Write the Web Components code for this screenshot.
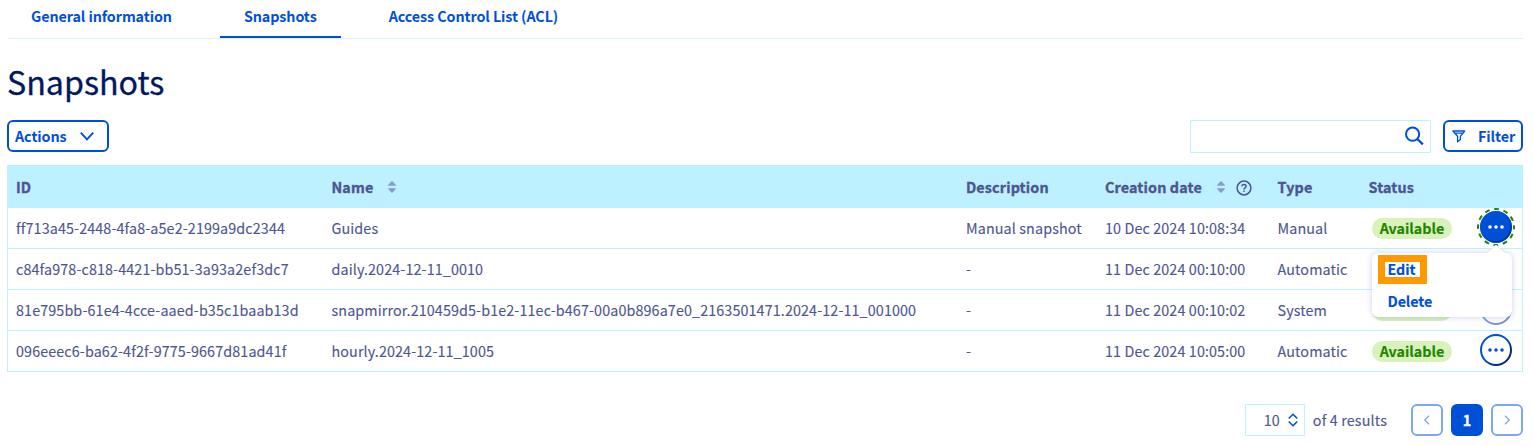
<!DOCTYPE html>
<html lang="en">
<head>
<meta charset="utf-8">
<title>Snapshots</title>
<style>
body { margin: 0; background: #fff; font-family: "Noto Sans CJK SC", "Noto Sans", sans-serif; font-size: 14.33px; line-height: 20px; color: #4d5592; --blue: #0050d7; --line: #bef1ff; }
</style>
</head>
<body>
<snapshot-page></snapshot-page>
<script>
const define = (name, html) => {
  const template = document.createElement('template');
  template.innerHTML = html;
  customElements.define(name, class extends HTMLElement {
    constructor() {
      super();
      this.attachShadow({ mode: 'open' }).append(template.content.cloneNode(true));
    }
  });
};

define('nav-tab', `<style>
:host { display: block; box-sizing: border-box; height: 38px; padding: 6px 24px 0; color: var(--blue); font-weight: 700; letter-spacing: -.09px; white-space: nowrap; }
:host([active]) { border-bottom: 2px solid var(--blue); }
</style><slot></slot>`);

define('tab-bar', `<style>
:host { display: flex; gap: 24px; height: 38px; border-bottom: 1px solid #def3fb; margin: 0 10px 0 8px; padding-left: 0; }
</style><slot></slot>`);

define('outline-button', `<style>
:host { display: flex; box-sizing: border-box; height: 32px; align-items: center; border: 2px solid var(--blue); border-radius: 6px; color: var(--blue); font-weight: 700; letter-spacing: -.09px; }
</style><slot></slot>`);

define('search-box', `<style>
:host { display: flex; box-sizing: border-box; width: 241px; height: 33px; border: 1px solid var(--line); border-radius: 1px; justify-content: flex-end; padding: 5px 6px 0 0; }
svg { width: 20px; height: 20px; }
</style><svg viewBox="0 0 20 20" fill="none" stroke="#0050d7" stroke-width="2"><circle cx="8.6" cy="8.2" r="6.6"/><path d="M13.3 13l5.6 5.4" stroke-width="2.3"/></svg>`);

define('sort-icon', `<style>
:host { display: block; width: 8px; height: 12px; }
svg { display: block; }
</style><svg width="8" height="12" viewBox="0 0 8 12" fill="#869dcb"><path d="M0 4.7Q0 4.2 .4 3.8L3.3.6Q4 0 4.7.6L7.6 3.8Q8 4.2 8 4.7ZM0 7.3Q0 7.8.4 8.2L3.3 11.4Q4 12 4.7 11.4L7.6 8.2Q8 7.8 8 7.3Z"/></svg>`);

define('help-icon', `<style>
:host { display: block; width: 16px; height: 16px; }
svg { display: block; }
</style><svg width="16" height="16" viewBox="0 0 16 16" fill="none" stroke="#4d5592" stroke-width="1.5"><circle cx="8" cy="8" r="6.9"/><path d="M5.9 6.3Q6 4.4 8 4.4Q10.1 4.4 10.1 6.2Q10.1 7.2 9 7.8Q8 8.4 8 9.5M8 10.6V12.1"/></svg>`);

define('data-row', `<style>
:host { display: grid; grid-template-columns: 315.5px 634.5px 139px 172.5px 91px 111px 1fr; height: 40px; border-bottom: 1px solid var(--line); letter-spacing: .115px; -webkit-text-stroke: .12px; }
:host([head]) { height: 42px; border: 0; background: var(--line); font-weight: 700; letter-spacing: .14px; -webkit-text-stroke: .35px #4d5592; }
::slotted(*) { position: relative; }
</style><slot></slot>`);

define('data-cell', `<style>
:host { display: flex; align-items: center; padding: 0 0 0 8px; white-space: nowrap; min-width: 0; }
:host([action]) { align-items: flex-start; padding-top: 3px; }
</style><slot></slot>`);

define('data-table', `<style>
:host { display: block; border: 1px solid var(--line); border-bottom: 0; margin: 12px 10px 0 7px; }
</style><slot></slot>`);

define('status-badge', `<style>
:host { display: block; box-sizing: border-box; width: 80px; height: 21px; line-height: 20px; padding-left: 1px; text-align: center; margin-left: 3px; border-radius: 11px; background: #d9f1bb; color: #228500; font-weight: 700; letter-spacing: 0; }
</style><slot></slot>`);

define('more-button', `<style>
:host { display: block; width: 32px; height: 32px; position: relative; }
svg { display: block; overflow: visible; }
.fill, .ring { display: none; }
:host([active]) .fill, :host([active]) .ring { display: block; }
:host([active]) { --dot: #fff; }
:host([active]) .edge { opacity: .6; }
.dots { fill: var(--dot, #0050d7); }
</style><svg width="32" height="32" viewBox="0 0 32 32">
<defs><linearGradient id="edge" x1="0" y1="0" x2="1" y2="1"><stop offset=".45" stop-color="#0050d7"/><stop offset=".8" stop-color="#00297a"/></linearGradient></defs>
<circle class="fill" cx="16" cy="16" r="16" fill="#0050d7"/>
<circle class="edge" cx="16" cy="16" r="15" fill="none" stroke="url(#edge)" stroke-width="2"/>
<circle class="ring" cx="16" cy="16" r="18" fill="none" stroke="#228500" stroke-width="2" stroke-dasharray="4.8 4.625" stroke-dashoffset="2.4"/>
<g class="dots"><circle cx="10" cy="16" r="1.8"/><circle cx="16" cy="16" r="1.8"/><circle cx="22" cy="16" r="1.8"/></g></svg>`);

define('action-menu', `<style>
:host { position: absolute; z-index: 5; left: -108px; top: 42px; box-sizing: border-box; width: 140px; height: 64px; border-radius: 6px; background: #fff; box-shadow: 0 0 6px rgba(0,14,156,.2); color: var(--blue); font-weight: 700; letter-spacing: -.1px; }
svg { position: absolute; left: 114px; top: -8px; }
.item { display: flex; align-items: center; height: 32px; padding-left: 16px; position: relative; }
.mark { position: absolute; box-sizing: border-box; left: 6px; top: 2px; width: 49px; height: 29px; border: 7px solid #ff9900; border-radius: 1px; }
</style><svg width="20" height="9"><path d="M0 9L10 0L20 9Z" fill="#fff"/><path d="M0 8L10 0L20 8" fill="none" stroke="#e4e4f4"/></svg>
<div class="mark"></div><div class="item"><slot name="first"></slot></div><div class="item"><slot name="second"></slot></div>`);

define('page-size', `<style>
:host { display: flex; align-items: center; box-sizing: border-box; width: 60px; height: 32px; border: 1px solid var(--line); border-radius: 1px; padding-left: 18px; gap: 8px; }
</style><slot></slot><svg width="10" height="14" viewBox="0 0 10 14" fill="none" stroke="#0050d7" stroke-width="1.6"><path d="M.7 5.5L5 1.3L9.3 5.5M.7 8.5L5 12.7L9.3 8.5"/></svg>`);

define('page-button', `<style>
:host { display: flex; align-items: center; justify-content: center; box-sizing: border-box; width: 32px; height: 32px; border: 2px solid #7fa7eb; border-radius: 6px; color: #7fa7eb; margin-left: 8px; font-weight: 700; }
:host([current]) { background: var(--blue); border-color: var(--blue); color: #fff; -webkit-text-stroke: .3px #fff; }
</style><slot></slot>`);

define('snapshot-page', `<style>
:host { display: block; height: 446px; overflow: hidden; }
h1 { margin: 0; padding: 19px 0 0 7px; height: 61px; box-sizing: border-box; font-weight: 400; font-size: 32.2px; line-height: 46px; color: #00185e; -webkit-text-stroke: .3px; }
.tools { display: flex; margin: 20px 10px 0 7px; height: 33px; gap: 12px; }
.gap { flex: 1; }
.actions { width: 102px; padding-left: 6px; gap: 12px; }
.filter { width: 80px; padding-left: 7px; gap: 12px; }
.foot { display: flex; align-items: center; justify-content: flex-end; margin: 32px 10px 0 0; -webkit-text-stroke: .12px; }
.count { margin: 0 16px 0 8px; letter-spacing: .14px; }
sort-icon { margin-left: 15px; }
help-icon { margin: 2px 0 0 11px; }
</style>
<tab-bar><nav-tab style="margin-left:-1px">General information</nav-tab><nav-tab active>Snapshots</nav-tab><nav-tab>Access Control List (ACL)</nav-tab></tab-bar>
<h1>Snapshots</h1>
<div class="tools">
<outline-button class="actions"><span>Actions</span><svg width="16" height="10" viewBox="0 0 16 10" fill="none" stroke="#0050d7" stroke-width="1.9"><path d="M1.8 1.7L8 8.3L14.2 1.7"/></svg></outline-button>
<div class="gap"></div><search-box></search-box>
<outline-button class="filter"><svg width="14" height="13" viewBox="0 0 14 13" fill="none" stroke="#0050d7" stroke-width="1.3" stroke-linejoin="round"><path d="M.9 1H12.7L8.4 6.3V9.5L5.6 11.8V6.3ZM3.2 3.1H10.4" /></svg><span>Filter</span></outline-button>
</div>
<data-table>
<data-row head><data-cell>ID</data-cell><data-cell>Name<sort-icon></sort-icon></data-cell><data-cell>Description</data-cell><data-cell>Creation date<sort-icon></sort-icon><help-icon></help-icon></data-cell><data-cell>Type</data-cell><data-cell>Status</data-cell><data-cell></data-cell></data-row>
<data-row><data-cell>ff713a45-2448-4fa8-a5e2-2199a9dc2344</data-cell><data-cell>Guides</data-cell><data-cell>Manual snapshot</data-cell><data-cell>10 Dec 2024 10:08:34</data-cell><data-cell>Manual</data-cell><data-cell><status-badge>Available</status-badge></data-cell><data-cell action style="z-index:3"><div style="position:relative"><more-button active></more-button><action-menu><span slot="first">Edit</span><span slot="second">Delete</span></action-menu></div></data-cell></data-row>
<data-row><data-cell>c84fa978-c818-4421-bb51-3a93a2ef3dc7</data-cell><data-cell>daily.2024-12-11_0010</data-cell><data-cell>-</data-cell><data-cell>11 Dec 2024 00:10:00</data-cell><data-cell>Automatic</data-cell><data-cell></data-cell><data-cell action></data-cell></data-row>
<data-row><data-cell>81e795bb-61e4-4cce-aaed-b35c1baab13d</data-cell><data-cell>snapmirror.210459d5-b1e2-11ec-b467-00a0b896a7e0_2163501471.2024-12-11_001000</data-cell><data-cell>-</data-cell><data-cell>11 Dec 2024 00:10:02</data-cell><data-cell>System</data-cell><data-cell><status-badge></status-badge></data-cell><data-cell action><more-button style="opacity:.5"></more-button></data-cell></data-row>
<data-row><data-cell>096eeec6-ba62-4f2f-9775-9667d81ad41f</data-cell><data-cell>hourly.2024-12-11_1005</data-cell><data-cell>-</data-cell><data-cell>11 Dec 2024 10:05:00</data-cell><data-cell>Automatic</data-cell><data-cell><status-badge>Available</status-badge></data-cell><data-cell action><more-button></more-button></data-cell></data-row>
</data-table>
<div class="foot"><page-size>10</page-size><span class="count">of 4 results</span>
<page-button><svg width="8" height="10" viewBox="0 0 8 10" fill="none" stroke="currentColor" stroke-width="1.3"><path d="M6 .8L1.8 5L6 9.2"/></svg></page-button><page-button current>1</page-button><page-button><svg width="8" height="10" viewBox="0 0 8 10" fill="none" stroke="currentColor" stroke-width="1.3"><path d="M2 .8L6.2 5L2 9.2"/></svg></page-button></div>`);
</script>
</body>
</html>
